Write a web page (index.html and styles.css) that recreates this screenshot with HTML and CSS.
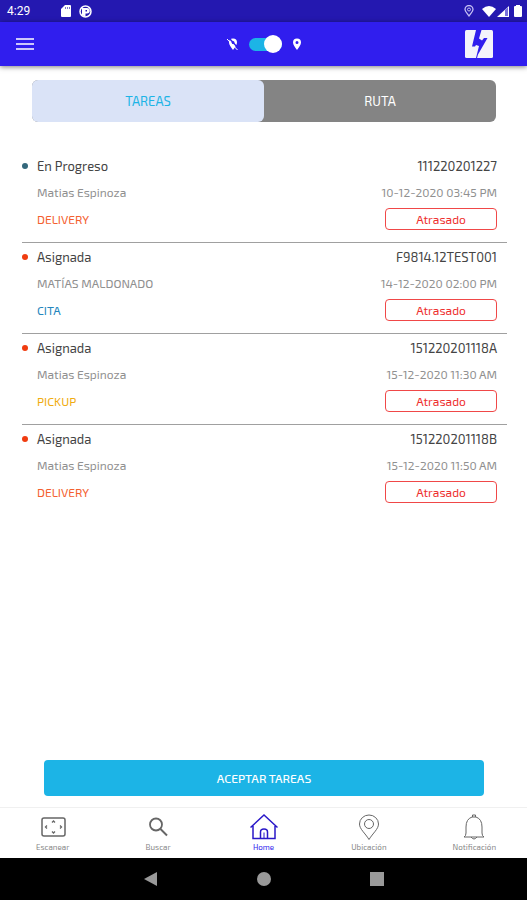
FILE: index.html
```html
<!DOCTYPE html>
<html lang="es">
<head>
<meta charset="utf-8">
<meta name="viewport" content="width=device-width, initial-scale=1">
<title>Tareas</title>
<link rel="stylesheet" href="styles.css">
</head>
<body>
<div class="status">
  <span class="clock">4:29</span>
  <div class="status-left">
    <svg width="10" height="12" viewBox="0 0 10 12"><path fill="#fff" d="M4 0h5a1 1 0 0 1 1 1v10a1 1 0 0 1-1 1H1a1 1 0 0 1-1-1V4z"/><path stroke="#2418b0" d="M4.500 2v2M6.500 2v2M8.500 2v2" opacity=".6"/></svg>
    <svg width="13" height="13" viewBox="0 0 13 13"><circle cx="6.500" cy="6.500" r="5.500" fill="none" stroke="#fff" stroke-width="1.500"/><path fill="#fff" d="M3 3h5a2.500 2.500 0 0 1 0 5.500H6.500V12L3 10z"/><path d="M6.500 5H8v1.500H6.500z" fill="#2418b0"/></svg>
  </div>
  <div class="status-right">
    <svg class="gps" width="10" height="12" viewBox="0 0 10 12"><path fill="none" stroke="#c5c0f4" stroke-width="1.300" d="M5 11C3 8 1 6.500 1 4.500a4 4 0 0 1 8 0C9 6.500 7 8 5 11z"/><circle cx="5" cy="4.500" r="1.500" fill="none" stroke="#c5c0f4"/></svg>
    <svg width="14" height="11" viewBox="0 0 14 11"><path fill="#fff" d="M0 3Q7-3 14 3L7 11z"/></svg>
    <svg width="12" height="11" viewBox="0 0 12 11"><path fill="#fff" d="M12 0v11H0z"/><path fill="#7a72dc" d="M8 4l3-3v9H8z"/></svg>
    <svg class="battery" width="8" height="12" viewBox="0 0 8 12"><path fill="#fff" d="M2 1V0h4v1h1a1 1 0 0 1 1 1v9a1 1 0 0 1-1 1H1a1 1 0 0 1-1-1V2a1 1 0 0 1 1-1z"/></svg>
  </div>
</div>
<header class="bar">
  <button class="menu" aria-label="Menú"><svg width="18" height="12" viewBox="0 0 18 12"><path stroke="#fff" stroke-width="1.600" d="M0 1h18M0 6h18M0 11h18"/></svg></button>
  <label class="tracking">
    <svg width="12" height="12" viewBox="0 0 12 12"><path fill="#fff" fill-rule="evenodd" d="M6 12C4 9 2 7 2 4.500a4 4 0 0 1 8 0C10 7 8 9 6 12zM6 3a1.500 1.500 0 1 0 0 3 1.500 1.500 0 0 0 0-3z"/><path stroke="#301eee" stroke-width="1.500" d="M2 0l10 11"/><path stroke="#fff" d="M0 1l10.500 11"/></svg>
    <input type="checkbox" role="switch" aria-label="Compartir ubicación" checked>
    <svg width="10" height="12" viewBox="0 0 10 12"><path fill="#fff" fill-rule="evenodd" d="M5 12C3 9 1 7 1 4.500a4 4 0 0 1 8 0C9 7 7 9 5 12zM5 3a1.500 1.500 0 1 0 0 3 1.500 1.500 0 0 0 0-3z"/></svg>
  </label>
  <button class="flash" aria-label="Acción rápida"><svg width="28" height="28" viewBox="0 0 28 28"><rect width="28" height="28" rx="1.500" fill="#f4f4fb"/><path fill="#301eee" d="M11 0h5.500l-2.500 8.500 3 2L19 8h3.500L13 24.500l-1 3.500h-1l1-4 2-8-3-1-1 1.500H7z"/></svg></button>
</header>
<main>
  <nav class="tabs">
    <button class="tab active">TAREAS</button>
    <button class="tab">RUTA</button>
  </nav>
  <ul class="tasks">
    <li class="task progress"><div class="line title"><span>En Progreso</span><span>111220201227</span></div><div class="line meta"><span>Matias Espinoza</span><span>10-12-2020 03:45 PM</span></div><div class="line kind"><span class="delivery">DELIVERY</span><span class="late">Atrasado</span></div></li>
    <li class="task"><div class="line title"><span>Asignada</span><span>F9814.12TEST001</span></div><div class="line meta"><span>MATÍAS MALDONADO</span><span>14-12-2020 02:00 PM</span></div><div class="line kind"><span class="cita">CITA</span><span class="late">Atrasado</span></div></li>
    <li class="task"><div class="line title"><span>Asignada</span><span>151220201118A</span></div><div class="line meta"><span>Matias Espinoza</span><span>15-12-2020 11:30 AM</span></div><div class="line kind"><span class="pickup">PICKUP</span><span class="late">Atrasado</span></div></li>
    <li class="task"><div class="line title"><span>Asignada</span><span>151220201118B</span></div><div class="line meta"><span>Matias Espinoza</span><span>15-12-2020 11:50 AM</span></div><div class="line kind"><span class="delivery">DELIVERY</span><span class="late">Atrasado</span></div></li>
  </ul>
  <button class="accept">ACEPTAR TAREAS</button>
</main>
<nav class="bottom">
  <a href="#escanear"><svg width="28" height="28" viewBox="0 0 28 28"><rect x="3" y="5" width="23" height="18" rx="2" stroke-width="1.500"/><path stroke-width="1.300" d="M13 9.500L14.500 8 16 9.500M13 18.500l1.500 1.500 1.500-1.500M8 12.500L6.500 14 8 15.500M21 12.500l1.500 1.500-1.500 1.500"/></svg>Escanear</a>
  <a href="#buscar"><svg width="28" height="28" viewBox="0 0 28 28"><circle cx="12" cy="11.500" r="6" stroke-width="1.800"/><path stroke-width="2" d="M16.500 16L23 22.500"/></svg>Buscar</a>
  <a href="#home" class="current"><svg width="28" height="28" viewBox="0 0 28 28"><path stroke-width="1.500" d="M.5 14.500L14 2l13.500 12.500M3 13v12.500h22V13M10.500 25v-6q0-3 3.500-3t3.500 3v6"/><path d="M14 19.500V25"/></svg>Home</a>
  <a href="#ubicacion"><svg width="28" height="28" viewBox="0 0 28 28"><path d="M14 26.500C10 20 4.500 16 4.500 11a9.500 9 0 0 1 19 0C23.500 16 18 20 14 26.500z"/><circle cx="14" cy="11" r="4.500"/></svg>Ubicación</a>
  <a href="#notificacion"><svg width="28" height="28" viewBox="0 0 28 28"><path d="M4 24q2-1 2-4v-6q0-8 6-10h4q6 2 6 10v6q0 3 2 4zM12.500 4V2h3v2M11 24q3 4 6 0"/></svg>Notificación</a>
</nav>
<footer class="system">
  <button aria-label="Atrás"><svg width="14" height="14" viewBox="0 0 14 14"><path fill="#999" d="M13 0v14L0 7z"/></svg></button>
  <button aria-label="Inicio"><svg width="14" height="14" viewBox="0 0 14 14"><circle cx="7" cy="7" r="7" fill="#999"/></svg></button>
  <button aria-label="Recientes"><svg width="14" height="14" viewBox="0 0 14 14"><path fill="#999" d="M0 0h14v14H0z"/></svg></button>
</footer>
</body>
</html>
```
FILE: styles.css
```css
* { box-sizing: border-box; }
body { margin: 0; min-height: 100vh; display: flex; flex-direction: column; background: #fff; font-family: "Exo 2", Exo, "Open Sans", sans-serif; font-size: 13px; line-height: 16px; color: #444; }
button { border: 0; padding: 0; background: none; font: inherit; color: inherit; }
svg { display: block; flex: none; }

.status { display: flex; align-items: center; height: 22px; padding: 0 5px 0 7px; background: #2418b0; color: #fff; font-family: Roboto, sans-serif; font-size: 12px; }
.status-left { display: flex; align-items: center; gap: 8px; margin-left: 31px; }
.status-right { display: flex; align-items: center; gap: 1px; margin-left: auto; }
.gps { margin-right: 7px; }
.battery { margin-left: 4px; }

.bar { display: grid; grid-template-columns: 1fr auto 1fr; align-items: center; height: 44px; padding: 0 34px 0 16px; background: #301eee; box-shadow: 0 1px 5px rgba(0, 0, 0, .5); }
.menu { justify-self: start; }
.flash { justify-self: end; }
.tracking { display: flex; align-items: center; gap: 10px; margin-left: 20px; }
.tracking input { appearance: none; display: flex; justify-content: flex-end; align-items: center; width: 33px; height: 13px; margin: 0; border-radius: 7px; background: #1cb4e6; }
.tracking input::before { content: ""; width: 18px; height: 18px; flex: none; border-radius: 50%; background: #fff; }

main { flex: 1; display: flex; flex-direction: column; padding: 14px 20px 11px 22px; }
.tabs { display: flex; margin: 0 11px 0 10px; border-radius: 6px; background: #848484; }
.tab { flex: 1; height: 42px; border-radius: 6px; color: #fff; }
.tab.active { background: #dae3f7; color: #1cb4e6; }

.tasks { list-style: none; margin: 30px 0 0; padding: 0; }
.task { padding: 1px 10px 9px 15px; border-bottom: 1px solid #a0a0a0; }
.task:last-child { border-bottom: 0; }
.line { display: flex; justify-content: space-between; align-items: center; height: 26px; }
.title { position: relative; }
.title::before { content: ""; position: absolute; left: -15px; width: 6px; height: 6px; border-radius: 50%; background: #f03c10; }
.progress .title::before { background: #34687c; }
.meta { color: #909090; font-size: 12px; }
.kind { height: 28px; font-size: 12px; }
.delivery { color: #f4602f; }
.cita { color: #2586bd; }
.pickup { color: #f0ac10; }
.late { width: 112px; border: 1px solid #f04848; border-radius: 4px; text-align: center; line-height: 20px; color: #ee3030; }
.accept { height: 36px; margin: auto 23px 0 22px; border-radius: 4px; background: #1cb4e6; color: #fff; font-size: 12px; font-weight: 500; }

.bottom { display: flex; height: 51px; border-top: 1px solid #f0f0f0; }
.bottom a { flex: 1; display: flex; flex-direction: column; align-items: center; padding-top: 5px; color: #888; font-size: 8px; line-height: 12px; text-decoration: none; }
.bottom svg { fill: none; stroke: #666; }
.bottom .current { color: #301eee; }
.bottom .current svg { stroke: #2a18c8; }

.system { display: flex; justify-content: center; align-items: center; gap: 99px; height: 42px; background: #000; }
```
